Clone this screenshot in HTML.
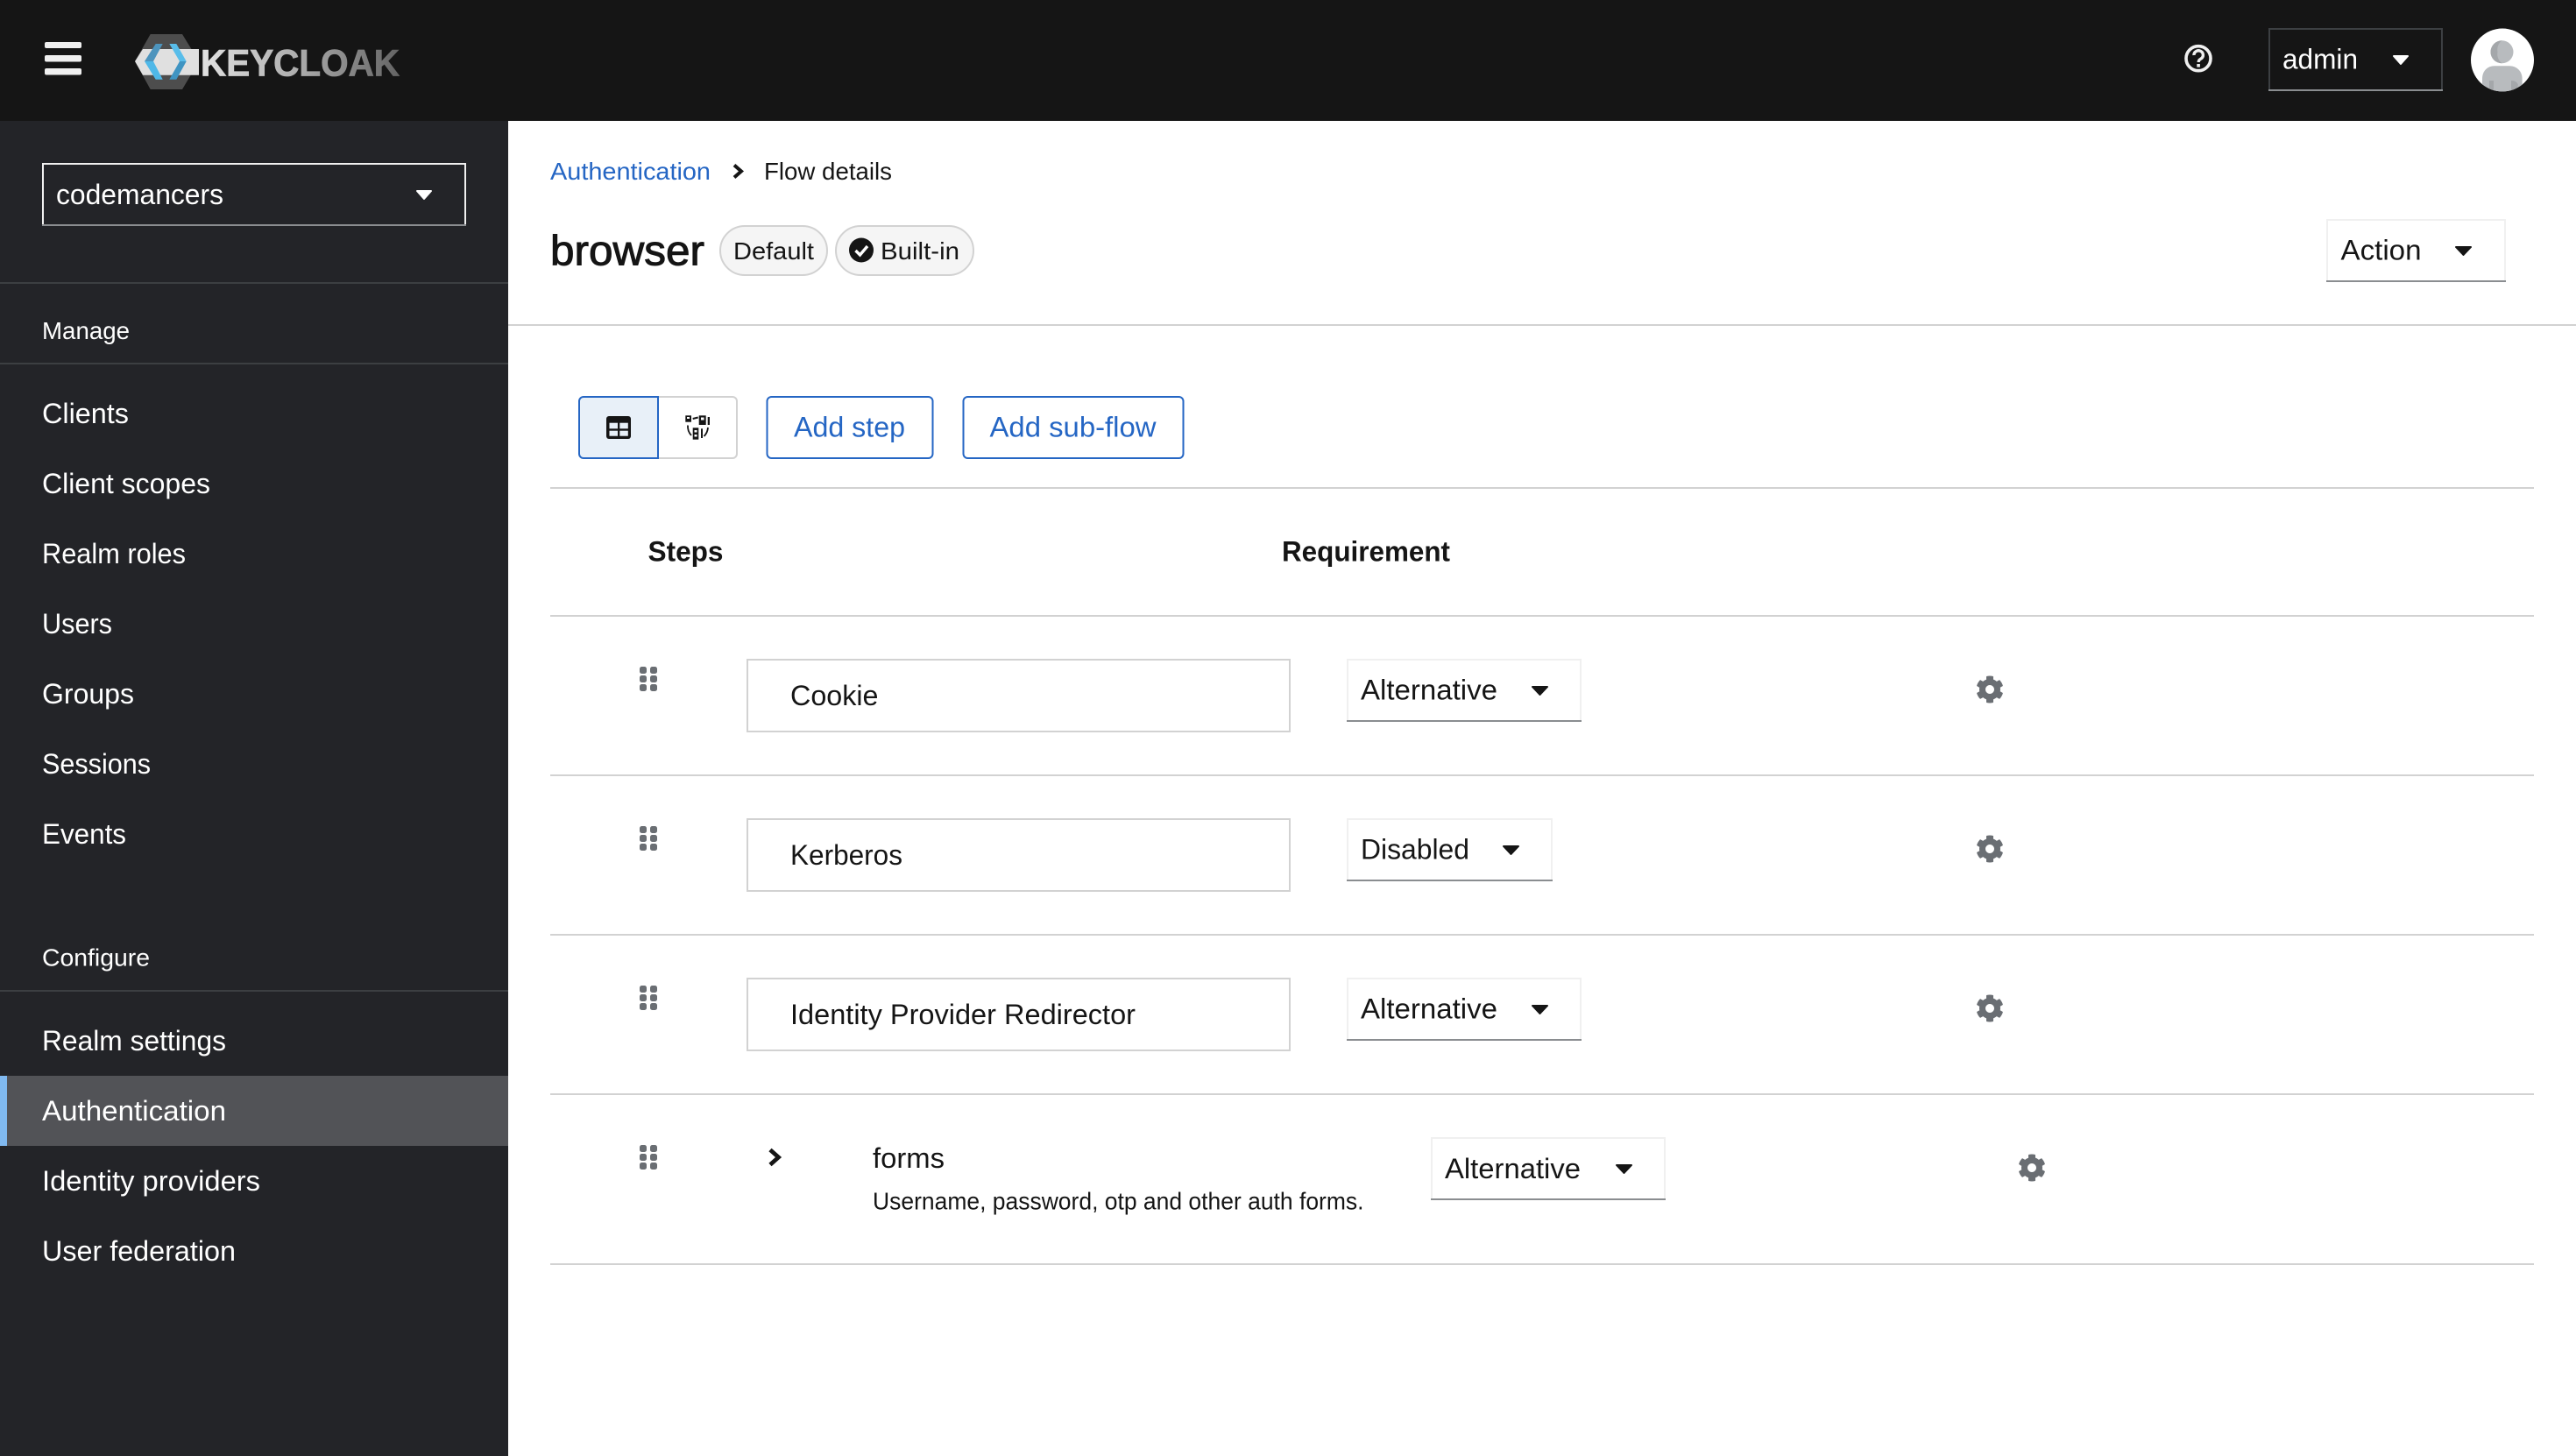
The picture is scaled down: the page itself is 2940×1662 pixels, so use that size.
<!DOCTYPE html>
<html lang="en"><head><meta charset="utf-8"><title>Keycloak - Flow details</title>
<style>
html,body{margin:0;padding:0;background:#fff;width:2940px;height:1662px;overflow:hidden}
svg{display:block}
text{font-family:"Liberation Sans",sans-serif;font-size:32px;fill:#151515;white-space:pre}
.s text,text.w{fill:#fff}
text.sm{font-size:28px}
text.b{font-weight:700}
text.l{fill:#2566c4}
</style></head><body>
<svg xmlns="http://www.w3.org/2000/svg" width="2940" height="1662" viewBox="0 0 2940 1662">
<defs>
<linearGradient id="kc" x1="229" x2="456" y1="0" y2="0" gradientUnits="userSpaceOnUse"><stop offset="0" stop-color="#e2e2e2"/><stop offset=".5" stop-color="#ababab"/><stop offset="1" stop-color="#646464"/></linearGradient>
<clipPath id="av"><circle cx="2856" cy="68.5" r="36"/></clipPath>
<path id="gear" fill-rule="evenodd" fill="#6a6e73" transform="scale(.0625)" d="M487.4 315.7l-42.6-24.6c4.3-23.2 4.3-47 0-70.2l42.6-24.6c4.9-2.8 7.1-8.6 5.5-14-11.1-35.6-30-67.8-54.7-94.6-3.8-4.1-10-5.1-14.8-2.3L380.8 110c-17.9-15.4-38.5-27.3-60.8-35.1V25.8c0-5.6-3.9-10.5-9.4-11.7-36.7-8.2-74.3-7.8-109.2 0-5.5 1.2-9.4 6.1-9.4 11.7V75c-22.2 7.9-42.8 19.8-60.8 35.1L88.7 85.5c-4.9-2.8-11-1.9-14.8 2.3-24.7 26.7-43.6 58.9-54.7 94.6-1.7 5.4.6 11.2 5.5 14L67.3 221c-4.3 23.2-4.3 47 0 70.2l-42.6 24.6c-4.9 2.8-7.1 8.6-5.5 14 11.1 35.6 30 67.8 54.7 94.6 3.8 4.1 10 5.1 14.8 2.3l42.6-24.6c17.9 15.4 38.5 27.3 60.8 35.1v49.2c0 5.6 3.9 10.5 9.4 11.7 36.7 8.2 74.3 7.8 109.2 0 5.5-1.2 9.4-6.1 9.4-11.7v-49.2c22.2-7.9 42.8-19.8 60.8-35.1l42.6 24.6c4.9 2.8 11 1.9 14.8-2.3 24.7-26.7 43.6-58.9 54.7-94.6 1.5-5.5-.7-11.3-5.6-14.1zM256 336c-44.1 0-80-35.9-80-80s35.9-80 80-80 80 35.9 80 80-35.9 80-80 80z"/>
<g id="drag" fill="#6a6e73"><rect x="0" y="0" width="8" height="8" rx="2.5"/><rect x="12" y="0" width="8" height="8" rx="2.5"/><rect x="0" y="10" width="8" height="8" rx="2.5"/><rect x="12" y="10" width="8" height="8" rx="2.5"/><rect x="0" y="20" width="8" height="8" rx="2.5"/><rect x="12" y="20" width="8" height="8" rx="2.5"/></g>
</defs>

<!-- main & sidebar -->
<rect width="2940" height="1662" fill="#fff"/>
<rect x="0" y="138" width="580" height="1524" fill="#232428"/>
<rect width="2940" height="138" fill="#151515"/>

<!-- hamburger -->
<g fill="#f0f0f0"><rect x="51" y="48" width="42" height="7" rx="2"/><rect x="51" y="63" width="42" height="7.5" rx="2"/><rect x="51" y="78" width="42" height="7.5" rx="2"/></g>

<!-- logo -->
<polygon points="171.7,39 208,39 227,70 208,102 171.7,102 154,70" fill="#4d4d4d"/>
<polygon points="154,70 163,56 227,56 227,85.7 163,85.7" fill="#e0e0e0"/>
<polygon points="177.7,50 185.7,50 175,70 165,70" fill="#4d94bd"/>
<polygon points="165,70 175,70 185.7,90.7 177.7,90.7" fill="#4fb8e8"/>
<polygon points="193.3,50 201.3,50 212.7,70 205,70" fill="#58bdea"/>
<polygon points="205,70 212.7,70 201.3,90.7 193.3,90.7" fill="#3f94c2"/>
<text x="229" y="86.500" textLength="227" lengthAdjust="spacingAndGlyphs" class="b" style="font-size:43px;fill:url(#kc);stroke:url(#kc);stroke-width:.8px">KEYCLOAK</text>

<!-- help -->
<circle cx="2509" cy="66.7" r="14" fill="none" stroke="#f0f0f0" stroke-width="3.6"/>
<path d="M2504 63a5.2 5 0 1 1 8 4c-2 1.300-2.800 2-2.800 4" fill="none" stroke="#f0f0f0" stroke-width="3.400"/>
<rect x="2507.300" y="73" width="3.600" height="3.600" fill="#f0f0f0"/>

<!-- admin -->
<rect x="2590" y="33" width="197" height="70" fill="none" stroke="#3c3f42" stroke-width="2"/>
<rect x="2589" y="102" width="199" height="2" fill="#8a8d90"/>
<text class="w" x="2605" y="78.500" textLength="86" lengthAdjust="spacingAndGlyphs">admin</text>
<path d="M2732 64H2748L2740 73Z" fill="#fff" stroke="#fff" stroke-width="2" stroke-linejoin="round"/>

<!-- avatar -->
<circle cx="2856" cy="68.500" r="36" fill="#fff"/>
<g clip-path="url(#av)">
<circle cx="2855.500" cy="59.300" r="13" fill="#b8bbbe"/>
<path d="M2855.500 46.300a13 13 0 0 0 0 26a13 13 0 0 1-5-13a13 13 0 0 1 5-13z" fill="#a4a7aa"/>
<path d="M2833 110V90c0-9 6-14.700 14-14.700h17c8 0 14.600 5.700 14.600 14.700v20z" fill="#b8bbbe"/>
<path d="M2841 92h5v14h-5zM2866 92c4 0 7 1.500 8 5l-3 9h-5z" fill="#a4a7aa"/>
</g>

<!-- realm select -->
<rect x="49" y="187" width="482" height="70" fill="none" stroke="#f0f0f0" stroke-width="2"/>
<rect x="48" y="256" width="484" height="2" fill="#8a8d90"/>
<text class="w" x="64" y="233" textLength="191" lengthAdjust="spacingAndGlyphs">codemancers</text>
<path d="M476 218H492L484 227Z" fill="#fff" stroke="#fff" stroke-width="2" stroke-linejoin="round"/>

<!-- sidebar -->
<g class="s">
<rect x="0" y="322" width="580" height="2" fill="#3c3f42"/>
<rect x="0" y="414" width="580" height="2" fill="#3c3f42"/>
<rect x="0" y="1130" width="580" height="2" fill="#3c3f42"/>
<rect x="0" y="1228" width="580" height="80" fill="#525357"/>
<rect x="0" y="1228" width="8" height="80" fill="#80b9f0"/>
<text class="sm" x="48" y="387" textLength="100" lengthAdjust="spacingAndGlyphs">Manage</text>
<text x="48" y="483" textLength="99" lengthAdjust="spacingAndGlyphs">Clients</text>
<text x="48" y="563" textLength="192" lengthAdjust="spacingAndGlyphs">Client scopes</text>
<text x="48" y="643" textLength="164" lengthAdjust="spacingAndGlyphs">Realm roles</text>
<text x="48" y="723" textLength="80" lengthAdjust="spacingAndGlyphs">Users</text>
<text x="48" y="803" textLength="105" lengthAdjust="spacingAndGlyphs">Groups</text>
<text x="48" y="883" textLength="124" lengthAdjust="spacingAndGlyphs">Sessions</text>
<text x="48" y="963" textLength="96" lengthAdjust="spacingAndGlyphs">Events</text>
<text class="sm" x="48" y="1102.700" textLength="123" lengthAdjust="spacingAndGlyphs">Configure</text>
<text x="48" y="1199" textLength="210" lengthAdjust="spacingAndGlyphs">Realm settings</text>
<text x="48" y="1279" textLength="210" lengthAdjust="spacingAndGlyphs">Authentication</text>
<text x="48" y="1359" textLength="249" lengthAdjust="spacingAndGlyphs">Identity providers</text>
<text x="48" y="1439" textLength="221" lengthAdjust="spacingAndGlyphs">User federation</text>
</g>

<!-- breadcrumb -->
<text class="sm l" x="628" y="205" textLength="183" lengthAdjust="spacingAndGlyphs">Authentication</text>
<polyline points="838,188.500 846,195.500 838,202.500" fill="none" stroke="#151515" stroke-width="4"/>
<text class="sm" x="872" y="205" textLength="146" lengthAdjust="spacingAndGlyphs">Flow details</text>

<!-- title -->
<text x="628" y="302.500" textLength="176" lengthAdjust="spacingAndGlyphs" style="font-size:48px;stroke:#151515;stroke-width:1px">browser</text>
<rect x="822" y="258" width="122" height="56" rx="28" fill="#f5f5f5" stroke="#d2d2d2" stroke-width="2"/>
<text class="sm" x="837" y="296" textLength="92" lengthAdjust="spacingAndGlyphs">Default</text>
<rect x="954" y="258" width="157" height="56" rx="28" fill="#f5f5f5" stroke="#d2d2d2" stroke-width="2"/>
<circle cx="983" cy="285.500" r="14" fill="#151515"/>
<polyline points="976.500,286 981.500,291 990,281" fill="none" stroke="#fff" stroke-width="3.400"/>
<text class="sm" x="1005" y="296" textLength="90" lengthAdjust="spacingAndGlyphs">Built-in</text>

<!-- action -->
<rect x="2656" y="251" width="203" height="70" fill="none" stroke="#f0f0f0" stroke-width="2"/>
<rect x="2655" y="320" width="205" height="2" fill="#8a8d90"/>
<text x="2671.500" y="296.700" textLength="92" lengthAdjust="spacingAndGlyphs">Action</text>
<path d="M2803 282H2820L2811.500 291Z" fill="#151515" stroke="#151515" stroke-width="2" stroke-linejoin="round"/>
<rect x="580" y="370" width="2360" height="2" fill="#d2d2d2"/>

<!-- toolbar -->
<path d="M751 453H836a5 5 0 0 1 5 5V518a5 5 0 0 1-5 5H751Z" fill="#fff" stroke="#d2d2d2" stroke-width="2"/>
<path d="M751 453H666a5 5 0 0 0-5 5V518a5 5 0 0 0 5 5H751Z" fill="#e8f0f8" stroke="#2566c4" stroke-width="2"/>
<rect x="692" y="475" width="28" height="26" rx="3" fill="#151515"/>
<g fill="#e8f0f8"><rect x="695.500" y="482.700" width="9.500" height="6.600"/><rect x="707.300" y="482.700" width="9.500" height="6.600"/><rect x="695.500" y="491.700" width="9.500" height="6"/><rect x="707.300" y="491.700" width="9.500" height="6"/></g>
<g fill="#151515">
<rect x="782.300" y="474.300" width="6.700" height="7.400"/><rect x="797.700" y="474.300" width="8" height="10.700"/><rect x="807.700" y="476" width="2.300" height="9"/>
<rect x="790.700" y="488.300" width="6.600" height="13.400"/><rect x="800" y="489.300" width="2" height="10.700"/>
</g>
<path d="M790.700 478L796.700 476.500" stroke="#151515" stroke-width="2" fill="none"/>
<path d="M785 485.500Q784.500 492 789 497M808 488Q807.500 494 803.500 498" stroke="#151515" stroke-width="1.800" fill="none"/>
<g fill="#fff"><rect x="784" y="476" width="3" height="2"/><rect x="800" y="476.500" width="3.500" height="3"/><rect x="792.500" y="491" width="3" height="2.500"/><rect x="792.500" y="496" width="3" height="2.500"/></g>

<rect x="875.500" y="453" width="189" height="70" rx="5" fill="#fff" stroke="#2566c4" stroke-width="2"/>
<text class="l" x="906" y="498.700" textLength="127" lengthAdjust="spacingAndGlyphs">Add step</text>
<rect x="1099.500" y="453" width="251" height="70" rx="5" fill="#fff" stroke="#2566c4" stroke-width="2"/>
<text class="l" x="1129.500" y="498.700" textLength="190" lengthAdjust="spacingAndGlyphs">Add sub-flow</text>
<rect x="628" y="556" width="2264" height="2" fill="#d2d2d2"/>

<!-- table head -->
<text class="b" x="739.500" y="640.700" textLength="86" lengthAdjust="spacingAndGlyphs">Steps</text>
<text class="b" x="1463" y="640.700" textLength="192" lengthAdjust="spacingAndGlyphs">Requirement</text>
<rect x="628" y="702" width="2264" height="2" fill="#d2d2d2"/>

<!-- row 1 -->
<use href="#drag" x="730" y="761"/>
<rect x="853" y="753" width="619" height="82" fill="#fff" stroke="#d2d2d2" stroke-width="2"/>
<text x="902" y="805" textLength="100.500" lengthAdjust="spacingAndGlyphs">Cookie</text>
<rect x="1538" y="753" width="266" height="70" fill="#fff" stroke="#f0f0f0" stroke-width="2"/>
<rect x="1537" y="822" width="268" height="2" fill="#8a8d90"/>
<text x="1553" y="798.700" textLength="156" lengthAdjust="spacingAndGlyphs">Alternative</text>
<path d="M1749 784H1766L1757.500 793Z" fill="#151515" stroke="#151515" stroke-width="2" stroke-linejoin="round"/>
<use href="#gear" x="2255" y="771"/>
<rect x="628" y="884" width="2264" height="2" fill="#d2d2d2"/>

<!-- row 2 -->
<use href="#drag" x="730" y="943"/>
<rect x="853" y="935" width="619" height="82" fill="#fff" stroke="#d2d2d2" stroke-width="2"/>
<text x="902" y="987" textLength="128" lengthAdjust="spacingAndGlyphs">Kerberos</text>
<rect x="1538" y="935" width="233" height="70" fill="#fff" stroke="#f0f0f0" stroke-width="2"/>
<rect x="1537" y="1004" width="235" height="2" fill="#8a8d90"/>
<text x="1553" y="980.700" textLength="124" lengthAdjust="spacingAndGlyphs">Disabled</text>
<path d="M1716 966H1733L1724.500 975Z" fill="#151515" stroke="#151515" stroke-width="2" stroke-linejoin="round"/>
<use href="#gear" x="2255" y="953"/>
<rect x="628" y="1066" width="2264" height="2" fill="#d2d2d2"/>

<!-- row 3 -->
<use href="#drag" x="730" y="1125"/>
<rect x="853" y="1117" width="619" height="82" fill="#fff" stroke="#d2d2d2" stroke-width="2"/>
<text x="902" y="1169" textLength="394" lengthAdjust="spacingAndGlyphs">Identity Provider Redirector</text>
<rect x="1538" y="1117" width="266" height="70" fill="#fff" stroke="#f0f0f0" stroke-width="2"/>
<rect x="1537" y="1186" width="268" height="2" fill="#8a8d90"/>
<text x="1553" y="1162.700" textLength="156" lengthAdjust="spacingAndGlyphs">Alternative</text>
<path d="M1749 1148H1766L1757.500 1157Z" fill="#151515" stroke="#151515" stroke-width="2" stroke-linejoin="round"/>
<use href="#gear" x="2255" y="1135"/>
<rect x="628" y="1248" width="2264" height="2" fill="#d2d2d2"/>

<!-- row 4 -->
<use href="#drag" x="730" y="1307"/>
<polyline points="879,1312.500 888.500,1321 879,1329.500" fill="none" stroke="#151515" stroke-width="4.800"/>
<text x="996" y="1333" textLength="82" lengthAdjust="spacingAndGlyphs">forms</text>
<text class="sm" x="996" y="1380.500" textLength="560.500" lengthAdjust="spacingAndGlyphs">Username, password, otp and other auth forms.</text>
<rect x="1634" y="1299" width="266" height="70" fill="#fff" stroke="#f0f0f0" stroke-width="2"/>
<rect x="1633" y="1368" width="268" height="2" fill="#8a8d90"/>
<text x="1649" y="1345" textLength="155" lengthAdjust="spacingAndGlyphs">Alternative</text>
<path d="M1845 1330H1862L1853.500 1339Z" fill="#151515" stroke="#151515" stroke-width="2" stroke-linejoin="round"/>
<use href="#gear" x="2303" y="1317"/>
<rect x="628" y="1442" width="2264" height="2" fill="#d2d2d2"/>
</svg>
</body></html>
